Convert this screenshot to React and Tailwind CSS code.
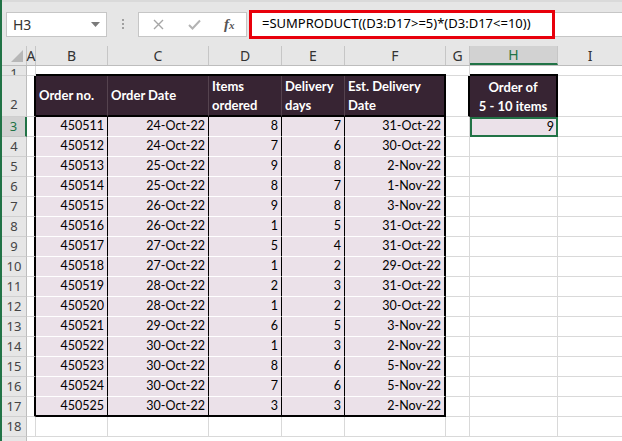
import React from "react";

const rows = [
  ["450511", "24-Oct-22", "8", "7", "31-Oct-22"],
  ["450512", "24-Oct-22", "7", "6", "30-Oct-22"],
  ["450513", "25-Oct-22", "9", "8", "2-Nov-22"],
  ["450514", "25-Oct-22", "8", "7", "1-Nov-22"],
  ["450515", "26-Oct-22", "9", "8", "3-Nov-22"],
  ["450516", "26-Oct-22", "1", "5", "31-Oct-22"],
  ["450517", "27-Oct-22", "5", "4", "31-Oct-22"],
  ["450518", "27-Oct-22", "1", "2", "29-Oct-22"],
  ["450519", "28-Oct-22", "2", "3", "31-Oct-22"],
  ["450520", "28-Oct-22", "1", "2", "30-Oct-22"],
  ["450521", "29-Oct-22", "6", "5", "3-Nov-22"],
  ["450522", "30-Oct-22", "1", "3", "2-Nov-22"],
  ["450523", "30-Oct-22", "8", "6", "5-Nov-22"],
  ["450524", "30-Oct-22", "7", "6", "5-Nov-22"],
  ["450525", "30-Oct-22", "3", "3", "2-Nov-22"],
];

const cellFont = { fontFamily: "Lato, 'Noto Sans', sans-serif" };
const uiFont = { fontFamily: "'Noto Sans', 'Open Sans', sans-serif" };

function RowHead({ n, selected }) {
  return (
    <div
      className={
        selected
          ? "w-[25px] shrink-0 h-full flex items-center justify-center bg-[#d2d2d2] text-[#217346] border-r-2 border-r-[#217346] border-b border-b-[#c6c6c6] text-[13px]"
          : "w-[25px] shrink-0 h-full flex items-center justify-center bg-[#e6e6e6] text-[#444] border-r border-r-[#bdbdbd] border-b border-b-[#cfcfcf] text-[13px]"
      }
      style={uiFont}
    >
      {n}
    </div>
  );
}

function DataRow({ r, data, last }) {
  const sel = r === 3;
  const pink = last
    ? "h-full shrink-0 bg-[#ebe1e9] border-b-2 border-b-black flex items-center justify-end pr-[3px] text-[12.5px] text-black"
    : "h-full shrink-0 bg-[#ebe1e9] border-b border-b-white flex items-center justify-end pr-[3px] text-[12.5px] text-black";
  return (
    <div className="flex h-[20px]" style={cellFont}>
      <RowHead n={r} selected={sel} />
      <div className="w-[9px] shrink-0 h-full border-r-2 border-r-black border-b border-b-[#d9d9d9]" />
      <div className={pink + " w-[72px] border-r border-r-black"}>{data[0]}</div>
      <div className={pink + " w-[101px] border-r border-r-black"}>{data[1]}</div>
      <div className={pink + " w-[73px] border-r border-r-black"}>{data[2]}</div>
      <div className={pink + " w-[63px] border-r border-r-black"}>{data[3]}</div>
      <div className={pink + " w-[101px] border-r-2 border-r-black"}>{data[4]}</div>
      <div className="w-[24px] shrink-0 h-full border-r border-r-[#d9d9d9] border-b border-b-[#d9d9d9]" />
      {sel ? (
        <div className="w-[88px] shrink-0 h-full bg-[#ebe1e9] border-2 border-[#217346] flex items-center justify-end pr-[2px] text-[12.5px] text-black">
          9
        </div>
      ) : (
        <div className="w-[88px] shrink-0 h-full border-r border-r-[#d9d9d9] border-b border-b-[#d9d9d9]" />
      )}
      <div className="flex-1 h-full border-b border-b-[#d9d9d9]" />
    </div>
  );
}

export default function App() {
  const colHead =
    "shrink-0 h-full flex items-center justify-center border-r border-r-[#c6c6c6] text-[14px] text-[#333]";
  return (
    <div className="w-[622px] h-[441px] overflow-hidden bg-white flex flex-col border-l-2 border-l-[#217346]">
      {/* top formula band */}
      <div className="h-[46px] shrink-0 bg-[#e6e6e6] flex items-center border-t-2 border-t-[#dadada]">
        <div
          className="ml-[4px] w-[101px] h-[25px] bg-white border border-[#c6c6c6] flex items-center justify-between pl-[6px] pr-[6px] text-[14px] text-[#333]"
          style={uiFont}
        >
          <span>H3</span>
          <svg width="9" height="5" viewBox="0 0 9 5">
            <path d="M0 0 L9 0 L4.5 5 Z" fill="#7a7a7a" />
          </svg>
        </div>
        <div className="w-[31px] flex flex-col items-center justify-center gap-[2px]">
          <span className="w-[2px] h-[2px] bg-[#a0a0a0]" />
          <span className="w-[2px] h-[2px] bg-[#a0a0a0]" />
          <span className="w-[2px] h-[2px] bg-[#a0a0a0]" />
        </div>
        <div className="w-[109px] h-[25px] bg-white border border-[#c6c6c6] flex items-center">
          <svg className="ml-[14px]" width="11" height="11" viewBox="0 0 11 11">
            <path d="M1 1 L10 10 M10 1 L1 10" stroke="#a6a6a6" strokeWidth="1.4" fill="none" />
          </svg>
          <svg className="ml-[24px]" width="13" height="11" viewBox="0 0 13 11">
            <path d="M1 6 L4.5 9.5 L12 1.5" stroke="#b3b3b3" strokeWidth="2" fill="none" />
          </svg>
          <span
            className="ml-[23px] text-[15px] italic text-[#555] leading-none"
            style={{ fontFamily: "'Liberation Serif', 'DejaVu Serif', serif", fontWeight: 700 }}
          >
            f<span className="text-[11px]">x</span>
          </span>
        </div>
        <div className="ml-[3px] flex-1 h-[25px] bg-white border-y border-[#c6c6c6] flex items-center">
          <div
            className="w-[306px] h-[29px] -ml-[1px] border-[3px] border-[#e8000b] bg-white flex items-center pl-[10px] text-[13px] text-black whitespace-nowrap"
            style={uiFont}
          >
            =SUMPRODUCT((D3:D17&gt;=5)*(D3:D17&lt;=10))
          </div>
        </div>
      </div>

      {/* column headers */}
      <div className="h-[20px] shrink-0 flex bg-[#e6e6e6] border-b border-b-[#bdbdbd]" style={uiFont}>
        <div className="w-[25px] shrink-0 h-full flex items-end justify-end border-r border-r-[#c6c6c6] pr-[3px] pb-[3px]">
          <svg width="12" height="12" viewBox="0 0 12 12">
            <path d="M12 0 L12 12 L0 12 Z" fill="#b7b7b7" />
          </svg>
        </div>
        <div className={colHead + " w-[9px]"}>A</div>
        <div className={colHead + " w-[72px]"}>B</div>
        <div className={colHead + " w-[101px]"}>C</div>
        <div className={colHead + " w-[73px]"}>D</div>
        <div className={colHead + " w-[63px]"}>E</div>
        <div className={colHead + " w-[101px]"}>F</div>
        <div className={colHead + " w-[24px]"}>G</div>
        <div className="w-[88px] shrink-0 h-full flex items-center justify-center bg-[#d2d2d2] border-r border-r-[#c6c6c6] border-b-2 border-b-[#217346] text-[14px] text-[#217346]">
          H
        </div>
        <div className="flex-1 h-full flex items-center justify-center text-[14px] text-[#333]">I</div>
      </div>

      {/* row 1 */}
      <div className="flex h-[10px] shrink-0 overflow-hidden">
        <div
          className="w-[25px] shrink-0 h-full overflow-hidden flex justify-center bg-[#e6e6e6] border-r border-r-[#bdbdbd] border-b border-b-[#cfcfcf] text-[13px] text-[#444]"
          style={uiFont}
        >
          <span className="leading-[13px] mt-[1px]">1</span>
        </div>
        <div className="w-[9px] shrink-0 h-full border-r border-r-[#d9d9d9] border-b border-b-[#d9d9d9]" />
        <div className="w-[410px] shrink-0 h-full border-b-2 border-b-black" />
        <div className="w-[24px] shrink-0 h-full border-r border-r-[#d9d9d9] border-b border-b-[#d9d9d9]" />
        <div className="w-[88px] shrink-0 h-full border-b-2 border-b-black" />
        <div className="flex-1 h-full border-b border-b-[#d9d9d9]" />
      </div>

      {/* row 2 header */}
      <div className="flex h-[41px] shrink-0" style={cellFont}>
        <div
          className="w-[25px] shrink-0 h-full flex items-end justify-center pb-[2px] bg-[#e6e6e6] border-r border-r-[#bdbdbd] border-b border-b-[#cfcfcf] text-[13px] text-[#444]"
          style={uiFont}
        >
          2
        </div>
        <div className="w-[9px] shrink-0 h-full border-r-2 border-r-black border-b border-b-[#d9d9d9]" />
        <div className="w-[72px] shrink-0 h-full bg-[#372433] border-r border-r-[#55434f] border-b-2 border-b-black flex items-center pl-[3px] text-[13px] font-bold text-white leading-[19px]">
          Order no.
        </div>
        <div className="w-[101px] shrink-0 h-full bg-[#372433] border-r border-r-[#55434f] border-b-2 border-b-black flex items-center pl-[3px] text-[13px] font-bold text-white leading-[19px]">
          Order Date
        </div>
        <div className="w-[73px] shrink-0 h-full bg-[#372433] border-r border-r-[#55434f] border-b-2 border-b-black flex flex-col justify-center pl-[3px] text-[13px] font-bold text-white leading-[19px]">
          <span>Items</span>
          <span>ordered</span>
        </div>
        <div className="w-[63px] shrink-0 h-full bg-[#372433] border-r border-r-[#55434f] border-b-2 border-b-black flex flex-col justify-center pl-[3px] text-[13px] font-bold text-white leading-[19px]">
          <span>Delivery</span>
          <span>days</span>
        </div>
        <div className="w-[101px] shrink-0 h-full bg-[#372433] border-r-2 border-r-black border-b-2 border-b-black flex flex-col justify-center pl-[3px] text-[13px] font-bold text-white leading-[19px]">
          <span>Est. Delivery</span>
          <span>Date</span>
        </div>
        <div className="w-[24px] shrink-0 h-full border-r-2 border-r-black border-b border-b-[#d9d9d9]" />
        <div className="w-[88px] shrink-0 h-full bg-[#372433] border-r-2 border-r-black flex flex-col justify-center items-center text-[13px] font-bold text-white leading-[19px]">
          <span>Order of</span>
          <span>5 - 10 items</span>
        </div>
        <div className="flex-1 h-full border-b border-b-[#d9d9d9]" />
      </div>

      {rows.map((d, i) => (
        <DataRow key={i} r={i + 3} data={d} last={i === rows.length - 1} />
      ))}

      {/* row 18 */}
      <div className="flex h-[20px] shrink-0">
        <RowHead n={18} />
        <div className="w-[9px] shrink-0 h-full border-r border-r-[#d9d9d9] border-b border-b-[#d9d9d9]" />
        <div className="w-[72px] shrink-0 h-full border-r border-r-[#d9d9d9] border-b border-b-[#d9d9d9]" />
        <div className="w-[101px] shrink-0 h-full border-r border-r-[#d9d9d9] border-b border-b-[#d9d9d9]" />
        <div className="w-[73px] shrink-0 h-full border-r border-r-[#d9d9d9] border-b border-b-[#d9d9d9]" />
        <div className="w-[63px] shrink-0 h-full border-r border-r-[#d9d9d9] border-b border-b-[#d9d9d9]" />
        <div className="w-[101px] shrink-0 h-full border-r border-r-[#d9d9d9] border-b border-b-[#d9d9d9]" />
        <div className="w-[24px] shrink-0 h-full border-r border-r-[#d9d9d9] border-b border-b-[#d9d9d9]" />
        <div className="w-[88px] shrink-0 h-full border-r border-r-[#d9d9d9] border-b border-b-[#d9d9d9]" />
        <div className="flex-1 h-full border-b border-b-[#d9d9d9]" />
      </div>
      <div className="flex h-[20px] shrink-0">
        <div className="w-[25px] shrink-0 h-full bg-[#e6e6e6] border-r border-r-[#bdbdbd]" />
      </div>
    </div>
  );
}
